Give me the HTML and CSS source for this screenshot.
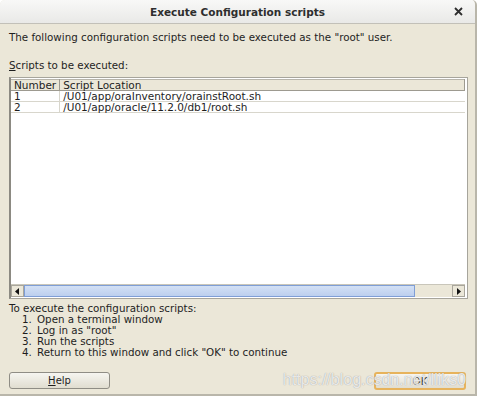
FILE: index.html
```html
<!DOCTYPE html>
<html lang="en">
<head>
  <meta charset="UTF-8">
  <title>Execute Configuration scripts</title>
  <link rel="stylesheet" href="styles.css">
</head>
<body>
  <div class="window">
    <div class="titlebar">
      <span class="title">Execute Configuration scripts</span>
      <span class="close">
        <svg width="9" height="9" viewBox="0 0 9 9"><path d="M1 1L8 8M8 1L1 8" stroke="#2e2e2e" stroke-width="1.8"/></svg>
      </span>
    </div>
    <div class="content">
      <p class="intro">The following configuration scripts need to be executed as the "root" user.</p>
      <p class="label"><u>S</u>cripts to be executed:</p>
      <div class="table-box">
        <table class="scripts">
          <thead>
            <tr><th class="num">Number</th><th>Script Location</th></tr>
          </thead>
          <tbody>
            <tr><td class="num">1</td><td>/U01/app/oraInventory/orainstRoot.sh</td></tr>
            <tr><td class="num">2</td><td>/U01/app/oracle/11.2.0/db1/root.sh</td></tr>
          </tbody>
        </table>
        <div class="fill"></div>
        <div class="hscroll">
          <div class="arrow"><svg width="5" height="7" viewBox="0 0 5 7"><path d="M4 0L0 3.5L4 7Z" fill="#111"/></svg></div>
          <div class="thumb"><span class="grip"></span></div>
          <div class="track"></div>
          <div class="arrow"><svg width="5" height="7" viewBox="0 0 5 7"><path d="M1 0L5 3.5L1 7Z" fill="#111"/></svg></div>
        </div>
      </div>
      <div class="steps">
        <p>To execute the configuration scripts:</p>
        <ol>
          <li>Open a terminal window</li>
          <li>Log in as "root"</li>
          <li>Run the scripts</li>
          <li>Return to this window and click "OK" to continue</li>
        </ol>
      </div>
      <div class="buttons">
        <button class="btn"><u>H</u>elp</button>
        <button class="btn btn-ok">OK</button>
      </div>
    </div>
    <div class="watermark">https://blog.csdn.net/lliks0</div>
  </div>
</body>
</html>
```

FILE: styles.css
```css
body {
  margin: 0;
  font-family: "DejaVu Sans", sans-serif;
  background: #ffffff;
}
.window {
  position: relative;
  width: 475px;
  height: 394px;
  background: #ebe7d8;
  border-right: 2px solid #b9b6aa;
  border-bottom: 2px solid #b9b6aa;
  border-radius: 5px 5px 0 0;
  overflow: hidden;
}
.titlebar {
  height: 23px;
  background: linear-gradient(#f8f8f7, #e9e9e7);
  border-bottom: 1px solid #c2c0b8;
  display: flex;
  align-items: center;
  justify-content: center;
  position: relative;
}
.title {
  font-weight: bold;
  font-size: 10.5px;
  color: #2e2e2e;
}
.close {
  position: absolute;
  right: 12px;
  top: 7px;
  display: flex;
}
.content {
  padding: 0 7px 0 9px;
  font-size: 10.3px;
  color: #1e1e1e;
}
.content p {
  margin: 0;
  line-height: 12px;
}
.intro {
  padding-top: 7px;
}
.label {
  margin-top: 16px !important;
}
.table-box {
  margin-top: 6px;
  height: 220px;
  border: 1px solid #a7a59c;
  border-left: 2px solid #8c8a82;
  background: #fff;
  display: flex;
  flex-direction: column;
  padding-right: 2px;
}
.scripts {
  border-collapse: collapse;
  width: 100%;
  margin-top: 1px;
  font-size: 10.5px;
}
.scripts th {
  background: #ebe7d8;
  font-weight: normal;
  text-align: left;
  border-top: 1px solid #b7b4aa;
  border-bottom: 1px solid #9d9a90;
  border-right: 1px solid #9d9a90;
  padding: 0 3px;
  height: 10px;
  line-height: 10px;
}
.scripts td {
  height: 10px;
  line-height: 10px;
  padding: 0 3px;
  border-bottom: 1px solid #d8d6cc;
}
.scripts .num {
  width: 42px;
  border-right: 1px solid #9d9a90;
}
.scripts td.num {
  border-right: 1px solid #d8d6cc;
}
.fill {
  flex: 1;
}
.hscroll {
  display: flex;
  height: 12px;
  margin-bottom: 1px;
  border-top: 1px solid #c9c6ba;
}
.arrow {
  width: 13px;
  background: #ebe7d8;
  border: 1px solid #a9a69c;
  display: flex;
  align-items: center;
  justify-content: center;
  box-sizing: border-box;
}
.thumb {
  width: 391px;
  background: linear-gradient(#d3e0f5, #bccfee);
  border: 1px solid #7f9ed6;
  box-sizing: border-box;
  display: flex;
  align-items: center;
  justify-content: center;
}
.grip {
  width: 20px;
  height: 6px;
  background-image: radial-gradient(#97acd8 40%, transparent 45%);
  background-size: 2px 2px;
}
.track {
  flex: 1;
  background: #ebe7d8;
}
.steps {
  margin-top: 4px;
}
.steps p {
  line-height: 11px !important;
}
.steps ol {
  margin: 0;
  padding-left: 26px;
}
.steps li {
  line-height: 11px;
  padding-left: 2px;
}
.buttons {
  display: flex;
  justify-content: space-between;
  margin-top: 14px;
  padding-right: 2px;
}
.btn {
  font-family: "DejaVu Sans", sans-serif;
  font-size: 10px;
  color: #1e1e1e;
  height: 17px;
  padding: 0;
  width: 101px;
  background: linear-gradient(#f6f5f0, #e0ddd0);
  border: 1px solid #8f8d85;
  border-radius: 3px;
}
.btn-ok {
  width: 92px;
  height: 18px;
  border: 2px solid #e7b35c;
}
.watermark {
  position: absolute;
  left: 283px;
  top: 371px;
  font-family: "Liberation Sans", sans-serif;
  font-size: 16px;
  color: rgba(255, 255, 255, 0.8);
  text-shadow: 0 0 1px #8a8a8a;
}
```
